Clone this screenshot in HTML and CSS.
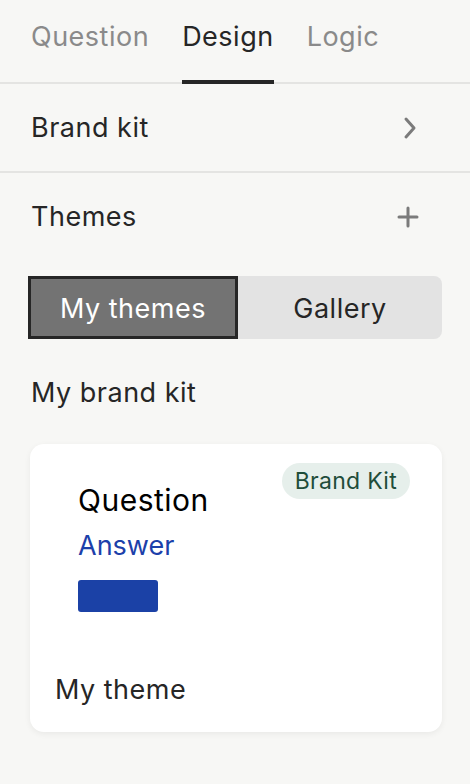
FILE: index.html
```html
<!DOCTYPE html>
<html>
<head>
<meta charset="utf-8">
<link rel="stylesheet" href="styles.css">
</head>
<body>
<div class="panel">
  <nav class="tabs">
    <div class="tab">Question</div>
    <div class="tab active">Design</div>
    <div class="tab">Logic</div>
  </nav>
  <div class="row row-border">
    <span class="row-title">Brand kit</span>
    <svg class="icon" width="16" height="24" viewBox="0 0 16 24"><path d="M4 3 L12 12 L4 21" fill="none" stroke="#7b7b7b" stroke-width="3" stroke-linecap="round" stroke-linejoin="round"/></svg>
  </div>
  <div class="row themes-row">
    <span class="row-title">Themes</span>
    <svg class="icon plus" width="22" height="22" viewBox="0 0 22 22"><path d="M11 2 V20 M2 11 H20" fill="none" stroke="#7b7b7b" stroke-width="3" stroke-linecap="round"/></svg>
  </div>
  <div class="segmented">
    <div class="seg seg-active">My themes</div>
    <div class="seg">Gallery</div>
  </div>
  <div class="section-title">My brand kit</div>
  <div class="card">
    <div class="card-top">
      <div class="preview">
        <div class="p-question">Question</div>
        <div class="p-answer">Answer</div>
        <div class="p-button"></div>
      </div>
      <span class="badge">Brand Kit</span>
    </div>
    <div class="card-name">My theme</div>
  </div>
</div>
</body>
</html>
```
FILE: styles.css
```css
* { box-sizing: border-box; }
html, body { margin: 0; padding: 0; }
body {
  background: #f7f7f5;
  font-family: Inter, "Noto Sans", sans-serif;
  color: #262626;
  width: 470px;
  height: 784px;
  overflow: hidden;
}
.panel { display: flex; flex-direction: column; }
.tabs {
  display: flex;
  gap: 33px;
  padding: 0 31px;
  border-bottom: 2px solid #e4e4e2;
  height: 84px;
}
.tab {
  font-size: 27px;
  letter-spacing: 0.5px;
  color: #8a8a8a;
  padding-top: 19px;
  height: 82px;
  line-height: 36px;
}
.tab.active {
  color: #262626;
  border-bottom: 4px solid #262626;
  height: 84px;
  margin-bottom: -2px;
}
.row {
  display: flex;
  align-items: center;
  justify-content: space-between;
  padding: 0 52px 0 31px;
  height: 88px;
}
.row-border { border-bottom: 2px solid #e4e4e2; height: 89px; }
.row-title { font-size: 27px; letter-spacing: 0.5px; color: #262626; }
.themes-row { height: 87px; padding-right: 51px; }
.segmented {
  margin: 16px 28px 0 28px;
  display: flex;
  height: 63px;
  background: #e3e3e3;
  border-radius: 8px;
}
.seg {
  flex: 1;
  display: flex;
  align-items: center;
  justify-content: center;
  font-size: 27px;
  letter-spacing: 0.5px;
  color: #262626;
  padding-top: 2px;
}
.seg-active {
  background: #737373;
  color: #ffffff;
  border: 3px solid #262626;
  flex: 0 0 210px;
}
.section-title {
  font-size: 27px;
  letter-spacing: 0.5px;
  padding: 36px 31px 0 31px;
  line-height: 36px;
  height: 105px;
}
.card {
  margin: 0 28px 0 30px;
  background: #ffffff;
  border-radius: 14px;
  box-shadow: 0 2px 6px rgba(0,0,0,0.06);
  height: 288px;
  padding: 19px 32px 0 25px;
  display: flex;
  flex-direction: column;
}
.card-top {
  display: flex;
  justify-content: space-between;
  align-items: flex-start;
  height: 200px;
}
.preview { padding: 19px 0 0 23px; display: flex; flex-direction: column; }
.p-question { font-size: 30px; letter-spacing: 0.5px; color: #000; line-height: 36px; }
.p-answer { font-size: 27px; color: #1c40aa; line-height: 34px; margin-top: 11px; }
.p-button {
  width: 80px; height: 32px; background: #1b41a6; border-radius: 3px; margin-top: 17px;
}
.badge {
  background: #e6efeb;
  color: #1f4d3a;
  font-size: 23px;
  letter-spacing: 0.3px;
  border-radius: 18px;
  height: 36px;
  line-height: 36px;
  padding: 0 13px;
}
.card-name { font-size: 27px; letter-spacing: 0.5px; color: #262626; padding-top: 10px; }
```
